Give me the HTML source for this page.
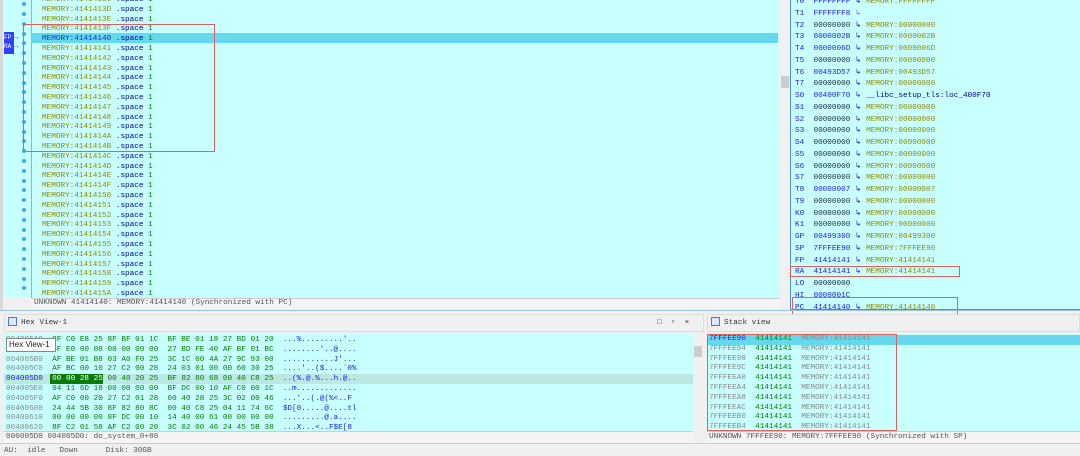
<!DOCTYPE html>
<html><head><meta charset="utf-8"><style>
*{margin:0;padding:0;box-sizing:border-box}
body{width:1080px;height:451px;overflow:hidden;background:#f0f0f0;font-family:"Liberation Mono",monospace;font-size:7.7px;position:relative}
.a{position:absolute;white-space:pre;line-height:10px}
.m{color:#8c8c00}.s{color:#000090}.g{color:#008000}.b{color:#2020e0}.k{color:#203040}.gr{color:#888}
.box{position:absolute;border:1px solid #e06060}
.d{position:absolute;left:22px;width:4px;height:4px;border-radius:50%;background:#40a8f0}
</style></head><body>
<!-- disasm -->
<div style="position:absolute;left:0;top:0;width:780px;height:298px;background:#c8ffff"></div>
<div style="position:absolute;left:0;top:0;width:3px;height:310px;background:#d8d8d8"></div>
<div style="position:absolute;left:31px;top:0;width:1px;height:298px;background:#9ad"></div>
<div style="position:absolute;left:32px;top:33px;width:746px;height:10px;background:#66d8ee"></div>
<div style="position:absolute;left:4px;top:32px;width:10px;height:22px;background:#3040ff"></div>
<div class="a" style="left:4px;top:33px;color:#fff;font-size:6px;line-height:9px">FP<br>RA</div>
<div class="a" style="left:14px;top:34px;color:#2030ff;font-size:7px;line-height:9px">→<br>→</div>
<div class="d" style="top:2px"></div><div class="d" style="top:12px"></div><div class="d" style="top:22px"></div><div class="d" style="top:32px"></div><div class="d" style="top:41px"></div><div class="d" style="top:51px"></div><div class="d" style="top:61px"></div><div class="d" style="top:71px"></div><div class="d" style="top:81px"></div><div class="d" style="top:90px"></div><div class="d" style="top:100px"></div><div class="d" style="top:110px"></div><div class="d" style="top:120px"></div><div class="d" style="top:130px"></div><div class="d" style="top:139px"></div><div class="d" style="top:149px"></div><div class="d" style="top:159px"></div><div class="d" style="top:169px"></div><div class="d" style="top:179px"></div><div class="d" style="top:188px"></div><div class="d" style="top:198px"></div><div class="d" style="top:208px"></div><div class="d" style="top:218px"></div><div class="d" style="top:228px"></div><div class="d" style="top:237px"></div><div class="d" style="top:247px"></div><div class="d" style="top:257px"></div><div class="d" style="top:267px"></div><div class="d" style="top:277px"></div><div class="d" style="top:286px"></div>
<div class="a" style="left:42px;top:-4px;line-height:9.8px"><span class="m">MEMORY:4141413C</span> <span class="s">.space</span> <span class="g">1</span>
<span class="m">MEMORY:4141413D</span> <span class="s">.space</span> <span class="g">1</span>
<span class="m">MEMORY:4141413E</span> <span class="s">.space</span> <span class="g">1</span>
<span class="m">MEMORY:4141413F</span> <span class="s">.space</span> <span class="g">1</span>
<span style="color:#1030d0">MEMORY:41414140</span> <span class="s">.space</span> <span class="g">1</span>
<span class="m">MEMORY:41414141</span> <span class="s">.space</span> <span class="g">1</span>
<span class="m">MEMORY:41414142</span> <span class="s">.space</span> <span class="g">1</span>
<span class="m">MEMORY:41414143</span> <span class="s">.space</span> <span class="g">1</span>
<span class="m">MEMORY:41414144</span> <span class="s">.space</span> <span class="g">1</span>
<span class="m">MEMORY:41414145</span> <span class="s">.space</span> <span class="g">1</span>
<span class="m">MEMORY:41414146</span> <span class="s">.space</span> <span class="g">1</span>
<span class="m">MEMORY:41414147</span> <span class="s">.space</span> <span class="g">1</span>
<span class="m">MEMORY:41414148</span> <span class="s">.space</span> <span class="g">1</span>
<span class="m">MEMORY:41414149</span> <span class="s">.space</span> <span class="g">1</span>
<span class="m">MEMORY:4141414A</span> <span class="s">.space</span> <span class="g">1</span>
<span class="m">MEMORY:4141414B</span> <span class="s">.space</span> <span class="g">1</span>
<span class="m">MEMORY:4141414C</span> <span class="s">.space</span> <span class="g">1</span>
<span class="m">MEMORY:4141414D</span> <span class="s">.space</span> <span class="g">1</span>
<span class="m">MEMORY:4141414E</span> <span class="s">.space</span> <span class="g">1</span>
<span class="m">MEMORY:4141414F</span> <span class="s">.space</span> <span class="g">1</span>
<span class="m">MEMORY:41414150</span> <span class="s">.space</span> <span class="g">1</span>
<span class="m">MEMORY:41414151</span> <span class="s">.space</span> <span class="g">1</span>
<span class="m">MEMORY:41414152</span> <span class="s">.space</span> <span class="g">1</span>
<span class="m">MEMORY:41414153</span> <span class="s">.space</span> <span class="g">1</span>
<span class="m">MEMORY:41414154</span> <span class="s">.space</span> <span class="g">1</span>
<span class="m">MEMORY:41414155</span> <span class="s">.space</span> <span class="g">1</span>
<span class="m">MEMORY:41414156</span> <span class="s">.space</span> <span class="g">1</span>
<span class="m">MEMORY:41414157</span> <span class="s">.space</span> <span class="g">1</span>
<span class="m">MEMORY:41414158</span> <span class="s">.space</span> <span class="g">1</span>
<span class="m">MEMORY:41414159</span> <span class="s">.space</span> <span class="g">1</span>
<span class="m">MEMORY:4141415A</span> <span class="s">.space</span> <span class="g">1</span></div>
<div class="box" style="left:23px;top:24px;width:192px;height:128px"></div>
<div style="position:absolute;left:32px;top:298px;width:748px;height:11px;background:#f4f4f4;border-top:1px solid #ccc"></div>
<div class="a" style="left:34px;top:298px;color:#555">UNKNOWN 41414140: MEMORY:41414140 (Synchronized with PC)</div>
<div style="position:absolute;left:780px;top:0;width:10px;height:310px;background:#f0f0f0"></div>
<div style="position:absolute;left:781px;top:76px;width:8px;height:12px;background:#ccc"></div>
<!-- registers -->
<div style="position:absolute;left:790px;top:0;width:290px;height:310px;background:#c8ffff;border-left:1px solid #4a8ad0;border-bottom:1px solid #4a8ad0"></div>
<div class="a" style="left:795px;top:-3px;line-height:11.75px"><span class="b">T0  FFFFFFFF</span> <span class="b">↳</span> <span class="m">MEMORY:FFFFFFFF</span>
<span class="b">T1  FFFFFFF8</span> <span class="gr">↳</span>
<span class="b">T2</span>  <span class="k">00000000</span> <span class="b">↳</span> <span class="m">MEMORY:00000000</span>
<span class="b">T3  0000002B</span> <span class="b">↳</span> <span class="m">MEMORY:0000002B</span>
<span class="b">T4  0000006D</span> <span class="b">↳</span> <span class="m">MEMORY:0000006D</span>
<span class="b">T5</span>  <span class="k">00000000</span> <span class="b">↳</span> <span class="m">MEMORY:00000000</span>
<span class="b">T6  00493D57</span> <span class="b">↳</span> <span class="m">MEMORY:00493D57</span>
<span class="b">T7</span>  <span class="k">00000000</span> <span class="b">↳</span> <span class="m">MEMORY:00000000</span>
<span class="b">S0  00400F70</span> <span class="b">↳</span> <span class="s">__libc_setup_tls:loc_400F70</span>
<span class="b">S1</span>  <span class="k">00000000</span> <span class="b">↳</span> <span class="m">MEMORY:00000000</span>
<span class="b">S2</span>  <span class="k">00000000</span> <span class="b">↳</span> <span class="m">MEMORY:00000000</span>
<span class="b">S3</span>  <span class="k">00000000</span> <span class="b">↳</span> <span class="m">MEMORY:00000000</span>
<span class="b">S4</span>  <span class="k">00000000</span> <span class="b">↳</span> <span class="m">MEMORY:00000000</span>
<span class="b">S5</span>  <span class="k">00000000</span> <span class="b">↳</span> <span class="m">MEMORY:00000000</span>
<span class="b">S6</span>  <span class="k">00000000</span> <span class="b">↳</span> <span class="m">MEMORY:00000000</span>
<span class="b">S7</span>  <span class="k">00000000</span> <span class="b">↳</span> <span class="m">MEMORY:00000000</span>
<span class="b">T8  00000007</span> <span class="b">↳</span> <span class="m">MEMORY:00000007</span>
<span class="b">T9</span>  <span class="k">00000000</span> <span class="b">↳</span> <span class="m">MEMORY:00000000</span>
<span class="b">K0</span>  <span class="k">00000000</span> <span class="b">↳</span> <span class="m">MEMORY:00000000</span>
<span class="b">K1</span>  <span class="k">00000000</span> <span class="b">↳</span> <span class="m">MEMORY:00000000</span>
<span class="b">GP  00499300</span> <span class="b">↳</span> <span class="m">MEMORY:00499300</span>
<span class="b">SP  7FFFEE90</span> <span class="b">↳</span> <span class="m">MEMORY:7FFFEE90</span>
<span class="b">FP  41414141</span> <span class="b">↳</span> <span class="m">MEMORY:41414141</span>
<span class="b">RA  41414141</span> <span class="b">↳</span> <span class="m">MEMORY:41414141</span>
<span class="b">LO</span>  <span class="k">00000000</span>
<span class="b">HI  0000001C</span>
<span class="b">PC  41414140</span> <span class="b">↳</span> <span class="m">MEMORY:41414140</span></div>
<div class="box" style="left:790px;top:266px;width:170px;height:11px"></div>
<div class="box" style="left:792px;top:297px;width:166px;height:19px"></div>
<!-- separator -->
<div style="position:absolute;left:0;top:310px;width:1080px;height:1px;background:#a0c4e8"></div>
<!-- hex view -->
<div style="position:absolute;left:4px;top:314px;width:700px;height:18px;background:#f0f0f0;border:1px solid #ddd"></div>
<div style="position:absolute;left:8px;top:317px;width:9px;height:9px;border:1px solid #4a7ad0;background:#dde8ff"></div>
<div class="a" style="left:21px;top:318px;color:#333">Hex View-1</div>
<div class="a" style="left:657px;top:318px;color:#333">□  ▫  ×</div>
<div style="position:absolute;left:4px;top:333px;width:689px;height:98px;background:#c8ffff"></div>
<div style="position:absolute;left:4px;top:374px;width:689px;height:10px;background:#bce8e4"></div>
<div style="position:absolute;left:50px;top:374px;width:53px;height:10px;background:#0a7a0a"></div>
<div class="a" style="left:6px;top:336px;line-height:9.8px"><span class="gr">004005A0</span>  <span class="g">8F C0 E8 25 8F BF 01 1C  BF BE 01 18 27 BD 01 20</span>  <span class="b">...%.........'..</span>
<span class="gr">004005B0</span>  <span class="g">8F E0 00 08 00 00 00 00  27 BD FE 40 AF BF 01 BC</span>  <span class="b">........'..@....</span>
<span class="gr">004005B0</span>  <span class="g">AF BE 01 B8 03 A0 F0 25  3C 1C 00 4A 27 9C 93 00</span>  <span class="b">...........J'...</span>
<span class="gr">004005C0</span>  <span class="g">AF BC 00 10 27 C2 00 28  24 03 01 00 00 60 30 25</span>  <span class="b">....'..($....`0%</span>
<span class="b">004005D0</span>  <span style="color:#fff">00 00 28 25</span> <span class="g">00 40 20 25  BF 82 80 68 00 40 C8 25</span>  <span class="b">..(%.@.%...h.@..</span>
<span class="gr">004005E0</span>  <span class="g">04 11 6D 18 00 00 00 00  BF DC 00 10 AF C0 00 1C</span>  <span class="b">..m.............</span>
<span class="gr">004005F0</span>  <span class="g">AF C0 00 20 27 C2 01 28  00 40 28 25 3C 02 00 46</span>  <span class="b">...'..(.@(%&lt;..F</span>
<span class="gr">00400600</span>  <span class="g">24 44 5B 30 8F 82 80 8C  00 40 C8 25 04 11 74 6C</span>  <span class="b">$D[0.....@....tl</span>
<span class="gr">00400610</span>  <span class="g">00 00 00 00 8F DC 00 10  14 40 00 61 00 00 00 00</span>  <span class="b">.........@.a....</span>
<span class="gr">00400620</span>  <span class="g">8F C2 01 58 AF C2 00 20  3C 02 00 46 24 45 5B 38</span>  <span class="b">...X...&lt;..F$E[8</span></div>
<div style="position:absolute;left:6px;top:338px;width:50px;height:14px;background:#fff;border:1px solid #888"></div>
<div class="a" style="left:9px;top:340px;color:#222;font-family:'Liberation Sans',sans-serif;font-size:8px">Hex View-1</div>
<div style="position:absolute;left:693px;top:333px;width:10px;height:110px;background:#f0f0f0"></div>
<div style="position:absolute;left:694px;top:346px;width:8px;height:11px;background:#ccc"></div>
<div style="position:absolute;left:4px;top:431px;width:689px;height:12px;background:#f4f4f4;border-top:1px solid #ccc"></div>
<div class="a" style="left:6px;top:432px;color:#555">000005D0 004005D0: do_system_0+80</div>
<div style="position:absolute;left:0;top:443px;width:1080px;height:8px;background:#f0f0f0;border-top:1px solid #ccc"></div>
<div class="a" style="left:4px;top:446px;color:#555">AU:  idle   Down      Disk: 30GB</div>
<!-- stack view -->
<div style="position:absolute;left:707px;top:314px;width:373px;height:18px;background:#f0f0f0;border:1px solid #ddd"></div>
<div style="position:absolute;left:711px;top:317px;width:9px;height:9px;border:1px solid #4a7ad0;background:#dde8ff"></div>
<div class="a" style="left:724px;top:318px;color:#333">Stack view</div>
<div style="position:absolute;left:707px;top:333px;width:373px;height:98px;background:#c8ffff"></div>
<div style="position:absolute;left:707px;top:335px;width:373px;height:10px;background:#66d8ee"></div>
<div class="a" style="left:709px;top:335px;line-height:9.8px"><span class="b">7FFFEE90</span>  <span class="g">41414141</span>  <span class="gr">MEMORY:41414141</span>
<span class="gr">7FFFEE94</span>  <span class="g">41414141</span>  <span class="gr">MEMORY:41414141</span>
<span class="gr">7FFFEE98</span>  <span class="g">41414141</span>  <span class="gr">MEMORY:41414141</span>
<span class="gr">7FFFEE9C</span>  <span class="g">41414141</span>  <span class="gr">MEMORY:41414141</span>
<span class="gr">7FFFEEA0</span>  <span class="g">41414141</span>  <span class="gr">MEMORY:41414141</span>
<span class="gr">7FFFEEA4</span>  <span class="g">41414141</span>  <span class="gr">MEMORY:41414141</span>
<span class="gr">7FFFEEA8</span>  <span class="g">41414141</span>  <span class="gr">MEMORY:41414141</span>
<span class="gr">7FFFEEAC</span>  <span class="g">41414141</span>  <span class="gr">MEMORY:41414141</span>
<span class="gr">7FFFEEB0</span>  <span class="g">41414141</span>  <span class="gr">MEMORY:41414141</span>
<span class="gr">7FFFEEB4</span>  <span class="g">41414141</span>  <span class="gr">MEMORY:41414141</span></div>
<div class="box" style="left:707px;top:334px;width:190px;height:97px"></div>
<div style="position:absolute;left:707px;top:431px;width:373px;height:12px;background:#f4f4f4;border-top:1px solid #ccc"></div>
<div class="a" style="left:709px;top:432px;color:#555">UNKNOWN 7FFFEE90: MEMORY:7FFFEE90 (Synchronized with SP)</div>
</body></html>
